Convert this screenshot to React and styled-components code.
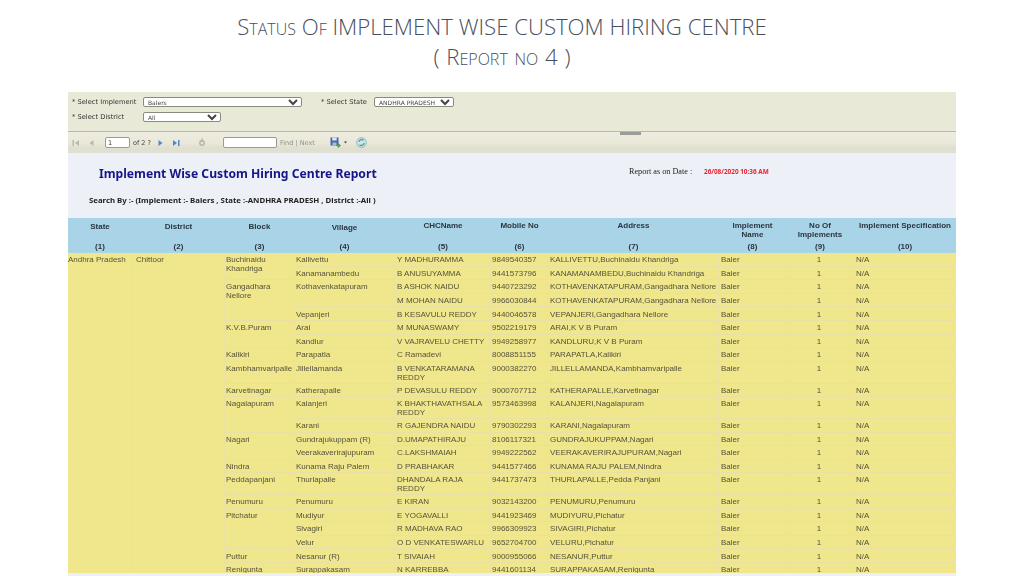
import React from "react";
import styled, { createGlobalStyle } from "styled-components";

const Global = createGlobalStyle`
  html, body { margin: 0; padding: 0; background: #fff; }
  body { font-family: "Liberation Sans", Arial, sans-serif; }
`;

const Page = styled.div`
  width: 1024px;
  height: 576px;
  overflow: hidden;
  display: flex;
  flex-direction: column;
  align-items: flex-start;
`;
const Title = styled.h1`
  width: 1004px;
  height: 92px;
  margin: 0;
  padding-top: 12px;
  box-sizing: border-box;
  text-align: center;
  font: 300 22.2px/29.5px "Open Sans", sans-serif;
  font-variant: small-caps;
  color: #474e5c;
`;
const ReportNo = styled.span`
  word-spacing: 1px;
`;
const Report = styled.div`
  width: 888px;
  height: 484px;
  margin-left: 68px;
  display: flex;
  flex-direction: column;
  background: #edf0f7;
  filter: blur(0.45px);
`;
const Filters = styled.div`
  height: 39px;
  box-sizing: border-box;
  flex: none;
  padding: 5px 0 0 4px;
  background: #e9e9d8;
  display: flex;
  flex-direction: column;
  gap: 5px;
`;
const FilterRow = styled.div`
  display: flex;
  align-items: center;
  height: 10px;
`;
const FilterLabel = styled.label`
  width: ${(p) => p.$w}px;
  margin-left: ${(p) => p.$ml || 0}px;
  flex: none;
  font: 6.7px/10px "DejaVu Sans", sans-serif;
  color: #333;
  white-space: nowrap;
`;
const Select = styled.select`
  width: ${(p) => p.$w}px;
  height: 10px;
  flex: none;
  box-sizing: border-box;
  padding: 0;
  font: 6px "DejaVu Sans", sans-serif;
  color: #444;
  background: #fff;
  border: 1px solid #8a8a80;
  border-radius: 2px;
`;
const Toolbar = styled.div`
  position: relative;
  height: 22px;
  box-sizing: border-box;
  flex: none;
  display: flex;
  align-items: center;
  padding-left: 4px;
  border-top: 1px solid #b9b9a8;
  background: linear-gradient(#edecdf 0%, #e9e8d8 55%, #e0e0d0 75%, #dfdfd6 100%);
`;
const Handle = styled.span`
  position: absolute;
  left: 552px;
  top: 0;
  width: 21px;
  height: 3px;
  background: #9c9c98;
`;
const Tool = styled.svg`
  flex: none;
  margin-left: ${(p) => p.$ml || 0}px;
`;
const PageInput = styled.input`
  width: ${(p) => p.$w}px;
  height: 11px;
  flex: none;
  box-sizing: border-box;
  padding: 0 2px;
  margin-left: ${(p) => p.$ml || 0}px;
  font: 6.5px "DejaVu Sans", sans-serif;
  color: #333;
  background: #fff;
  border: 1px solid #9b9b90;
  border-radius: 2px;
`;
const ToolText = styled.span`
  flex: none;
  width: ${(p) => p.$w}px;
  margin-left: ${(p) => p.$ml || 0}px;
  font: 6.5px "DejaVu Sans", sans-serif;
  color: ${(p) => p.$c || "#444"};
  white-space: nowrap;
`;
const Head = styled.div`
  height: 65px;
  flex: none;
  box-sizing: border-box;
  padding: 13px 0 0 21px;
  display: flex;
  flex-direction: column;
`;
const HeadTop = styled.div`
  display: flex;
  align-items: flex-start;
  height: 29px;
`;
const ReportName = styled.h2`
  width: 530px;
  flex: none;
  margin: 0 0 0 10px;
  font: bold 12.15px/16px "Noto Sans", sans-serif;
  color: #15158a;
  white-space: nowrap;
`;
const AsOn = styled.span`
  width: 75px;
  flex: none;
  margin-top: 1px;
  font: 8.2px/10px "Liberation Serif", serif;
  color: #222;
  white-space: nowrap;
`;
const AsOnDate = styled.span`
  margin-top: 1px;
  font: bold 6.4px/10px "Noto Sans", sans-serif;
  color: #ee2233;
  white-space: nowrap;
`;
const SearchBy = styled.div`
  font: bold 7.8px/10px "Noto Sans", sans-serif;
  color: #222;
  white-space: nowrap;
`;
const TableClip = styled.div`
  height: 355px;
  flex: none;
  overflow: hidden;
`;
const Table = styled.table`
  width: 888px;
  table-layout: fixed;
  border-collapse: separate;
  border-spacing: 0;
  font: 8px/8.8px "Liberation Sans", Arial, sans-serif;
`;
const HeadCell = styled.th`
  box-sizing: border-box;
  height: ${(p) => p.$h}px;
  padding: ${(p) => p.$pt}px 1px 0;
  vertical-align: top;
  text-align: center;
  white-space: pre-line;
  background: #a9d4e7;
  color: #2a3540;
  font: bold 8px/9px "Liberation Sans", Arial, sans-serif;
`;
const Cell = styled.td`
  box-sizing: border-box;
  padding: 3.2px 1px 0 ${(p) => p.$pl}px;
  vertical-align: top;
  overflow: hidden;
  white-space: ${(p) => (p.$wrap ? "normal" : "nowrap")};
  text-align: ${(p) => (p.$center ? "center" : "left")};
  color: #55533c;
  background: #f0e68c;
  border-right: 1px solid #ebe2a0;
  border-bottom: 1px solid #e8e0a4;
`;
const Row = styled.tr`
  height: ${(p) => (p.$tall ? 21 : 13.6)}px;
`;

const cols = [64, 93, 69, 101, 96, 57, 171, 67, 68, 102];
const heads = [
  ["State", 4], ["District", 4], ["Block", 4], ["Village", 5], ["CHCName", 3],
  ["Mobile No", 3], ["Address", 3], ["Implement\nName", 3], ["No Of\nImplements", 3], ["Implement Specification", 3],
];

const rows = [
  ["Buchinaidu Khandriga", 2, "Kallivettu", 1, "Y MADHURAMMA", "9849540357", "KALLIVETTU,Buchinaidu Khandriga"],
  [null, 0, "Kanamanambedu", 1, "B ANUSUYAMMA", "9441573796", "KANAMANAMBEDU,Buchinaidu Khandriga"],
  ["Gangadhara Nellore", 3, "Kothavenkatapuram", 2, "B ASHOK NAIDU", "9440723292", "KOTHAVENKATAPURAM,Gangadhara Nellore"],
  [null, 0, null, 0, "M MOHAN NAIDU", "9966030844", "KOTHAVENKATAPURAM,Gangadhara Nellore"],
  [null, 0, "Vepanjeri", 1, "B KESAVULU REDDY", "9440046578", "VEPANJERI,Gangadhara Nellore"],
  ["K.V.B.Puram", 2, "Arai", 1, "M MUNASWAMY", "9502219179", "ARAI,K V B Puram"],
  [null, 0, "Kandlur", 1, "V VAJRAVELU CHETTY", "9949258977", "KANDLURU,K V B Puram"],
  ["Kalikiri", 1, "Parapatla", 1, "C Ramadevi", "8008851155", "PARAPATLA,Kalikiri"],
  ["Kambhamvaripalle", 1, "Jillellamanda", 1, "B VENKATARAMANA REDDY", "9000382270", "JILLELLAMANDA,Kambhamvaripalle", true],
  ["Karvetinagar", 1, "Katherapalle", 1, "P DEVASULU REDDY", "9000707712", "KATHERAPALLE,Karvetinagar"],
  ["Nagalapuram", 2, "Kalanjeri", 1, "K BHAKTHAVATHSALA REDDY", "9573463998", "KALANJERI,Nagalapuram", true],
  [null, 0, "Karani", 1, "R GAJENDRA NAIDU", "9790302293", "KARANI,Nagalapuram"],
  ["Nagari", 2, "Gundrajukuppam (R)", 1, "D.UMAPATHIRAJU", "8106117321", "GUNDRAJUKUPPAM,Nagari"],
  [null, 0, "Veerakaverirajupuram", 1, "C.LAKSHMAIAH", "9949222562", "VEERAKAVERIRAJUPURAM,Nagari"],
  ["Nindra", 1, "Kunama Raju Palem", 1, "D PRABHAKAR", "9441577466", "KUNAMA RAJU PALEM,Nindra"],
  ["Peddapanjani", 1, "Thurlapalle", 1, "DHANDALA RAJA REDDY", "9441737473", "THURLAPALLE,Pedda Panjani", true],
  ["Penumuru", 1, "Penumuru", 1, "E KIRAN", "9032143200", "PENUMURU,Penumuru"],
  ["Pitchatur", 3, "Mudiyur", 1, "E YOGAVALLI", "9441923469", "MUDIYURU,Pichatur"],
  [null, 0, "Sivagiri", 1, "R MADHAVA RAO", "9966309923", "SIVAGIRI,Pichatur"],
  [null, 0, "Velur", 1, "O D VENKATESWARLU", "9652704700", "VELURU,Pichatur"],
  ["Puttur", 1, "Nesanur (R)", 1, "T SIVAIAH", "9000955066", "NESANUR,Puttur"],
  ["Renigunta", 1, "Surappakasam", 1, "N KARREBBA", "9441601134", "SURAPPAKASAM,Renigunta"],
];

const First = () => (
  <Tool width="8" height="8" viewBox="0 0 8 8" $ml={0}>
    <rect x="0.5" y="1" width="1.5" height="6" fill="#b9b9ae" />
    <path d="M7 1v6L3 4z" fill="#b9b9ae" />
  </Tool>
);
const Prev = () => (
  <Tool width="5" height="8" viewBox="0 0 5 8" $ml={9}>
    <path d="M4.5 1v6L.5 4z" fill="#b9b9ae" />
  </Tool>
);
const Next = () => (
  <Tool width="5" height="8" viewBox="0 0 5 8" $ml={9}>
    <path d="M.5 1v6l4-3z" fill="#4f86d0" />
  </Tool>
);
const Last = () => (
  <Tool width="8" height="8" viewBox="0 0 8 8" $ml={9}>
    <path d="M1 1v6l4-3z" fill="#4f86d0" />
    <rect x="6" y="1" width="1.5" height="6" fill="#4f86d0" />
  </Tool>
);
const Refresh = () => (
  <Tool width="8" height="9" viewBox="0 0 8 9" $ml={18}>
    <circle cx="4" cy="5" r="2.2" fill="none" stroke="#b3b3a8" strokeWidth="1.4" />
    <path d="M4 0.5v3" stroke="#b3b3a8" strokeWidth="1.4" />
  </Tool>
);
const Save = () => (
  <Tool width="11" height="11" viewBox="0 0 11 11" $ml={14}>
    <rect x="0.5" y="0.5" width="8" height="8" fill="#4766ad" />
    <rect x="2.2" y="0.5" width="4.5" height="3" fill="#dfe6f2" />
    <rect x="2.5" y="5.5" width="4" height="3" fill="#a9bbdc" />
    <path d="M6 8.5h3M8 6.5l2.5 2-2.5 2z" stroke="#4fa34a" fill="#4fa34a" />
  </Tool>
);
const Drop = () => (
  <Tool width="3" height="3" viewBox="0 0 3 3" $ml={3}>
    <path d="M0 .5h3L1.5 2.5z" fill="#444" />
  </Tool>
);
const Globe = () => (
  <Tool width="11" height="11" viewBox="0 0 11 11" $ml={9}>
    <circle cx="5.5" cy="5.5" r="4.8" fill="#cfe6ee" stroke="#6fa9c4" strokeWidth="0.8" />
    <path d="M3 5a2.6 2.6 0 0 1 4.5-1.6M8 6a2.6 2.6 0 0 1-4.5 1.6" fill="none" stroke="#45a548" strokeWidth="1.2" />
  </Tool>
);

export default function App() {
  return (
    <Page>
      <Global />
      <Title>
        Status Of IMPLEMENT WISE CUSTOM HIRING CENTRE
        <br />
        <ReportNo>( Report no 4 )</ReportNo>
      </Title>
      <Report>
        <Filters>
          <FilterRow>
            <FilterLabel $w={71}>* Select Implement</FilterLabel>
            <Select $w={159} defaultValue="Balers">
              <option>Balers</option>
            </Select>
            <FilterLabel $w={53} $ml={19}>* Select State</FilterLabel>
            <Select $w={80} defaultValue="ANDHRA PRADESH">
              <option>ANDHRA PRADESH</option>
            </Select>
          </FilterRow>
          <FilterRow>
            <FilterLabel $w={71}>* Select District</FilterLabel>
            <Select $w={78} defaultValue="All">
              <option>All</option>
            </Select>
          </FilterRow>
        </Filters>
        <Toolbar>
          <Handle />
          <First />
          <Prev />
          <PageInput $w={25} $ml={11} defaultValue="1" />
          <ToolText $w={16} $ml={3}>of 2 ?</ToolText>
          <Next />
          <Last />
          <Refresh />
          <PageInput $w={54} $ml={17} />
          <ToolText $w={36} $ml={3} $c="#8f8f88">Find | Next</ToolText>
          <Save />
          <Drop />
          <Globe />
        </Toolbar>
        <Head>
          <HeadTop>
            <ReportName>Implement Wise Custom Hiring Centre Report</ReportName>
            <AsOn>Report as on Date :</AsOn>
            <AsOnDate>26/08/2020 10:36 AM</AsOnDate>
          </HeadTop>
          <SearchBy>Search By :- (Implement :- Balers , State :-ANDHRA PRADESH , District :-All )</SearchBy>
        </Head>
        <TableClip>
          <Table>
            <colgroup>
              {cols.map((w, i) => (
                <col key={i} style={{ width: w }} />
              ))}
            </colgroup>
            <thead>
              <tr>
                {heads.map(([h, pt]) => (
                  <HeadCell key={h} $h={24} $pt={pt}>{h}</HeadCell>
                ))}
              </tr>
              <tr>
                {heads.map((_, i) => (
                  <HeadCell key={i} $h={11} $pt={0}>({i + 1})</HeadCell>
                ))}
              </tr>
            </thead>
            <tbody>
              {rows.map((r, i) => (
                <Row key={i} $tall={r[7]}>
                  {i === 0 && <Cell rowSpan={rows.length} $pl={0}>Andhra Pradesh</Cell>}
                  {i === 0 && <Cell rowSpan={rows.length} $pl={4}>Chittoor</Cell>}
                  {r[0] && <Cell rowSpan={r[1]} $pl={1} $wrap>{r[0]}</Cell>}
                  {r[2] && <Cell rowSpan={r[3]} $pl={2}>{r[2]}</Cell>}
                  <Cell $pl={2} $wrap>{r[4]}</Cell>
                  <Cell $pl={1}>{r[5]}</Cell>
                  <Cell $pl={2}>{r[6]}</Cell>
                  <Cell $pl={2}>Baler</Cell>
                  <Cell $pl={0} $center>1</Cell>
                  <Cell $pl={2}>N/A</Cell>
                </Row>
              ))}
            </tbody>
          </Table>
        </TableClip>
      </Report>
    </Page>
  );
}
